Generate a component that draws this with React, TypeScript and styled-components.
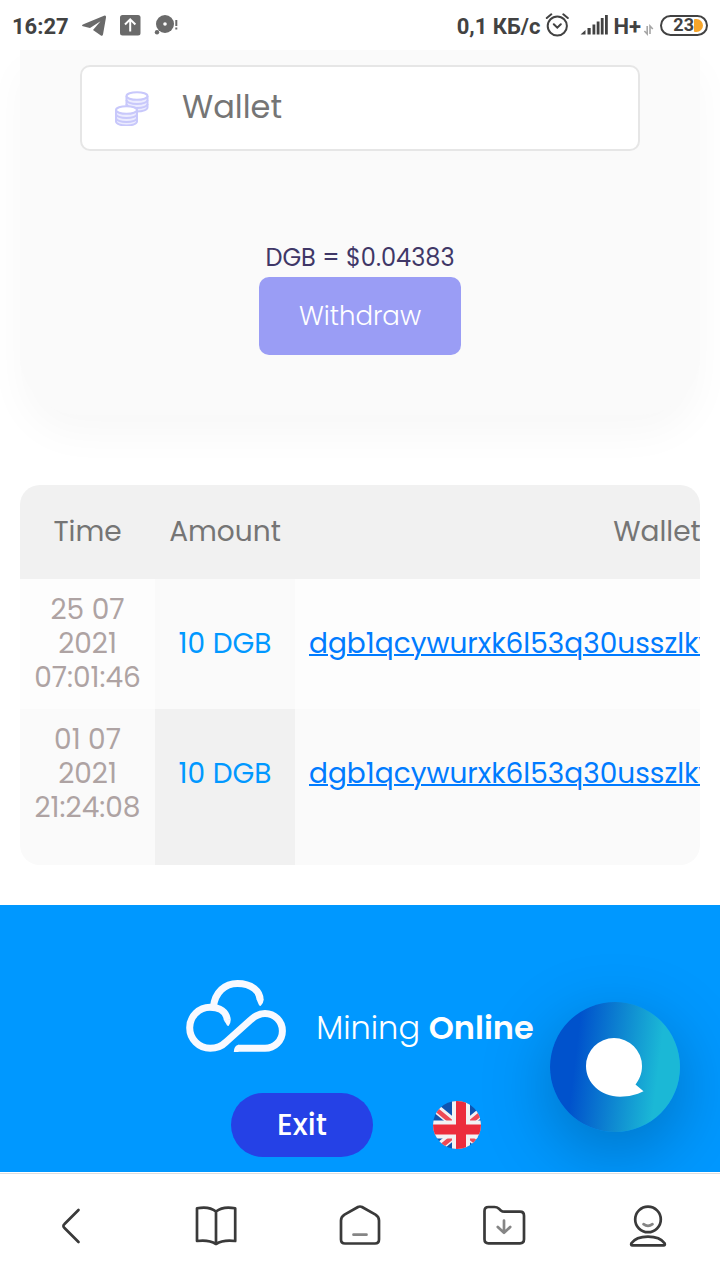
import React from "react";
import styled, { createGlobalStyle } from "styled-components";

const GlobalStyle = createGlobalStyle`
  *, *::before, *::after { box-sizing: border-box; }
  body {
    margin: 0;
    background: #fff;
    font-family: Poppins, Inter, "Liberation Sans", sans-serif;
  }
`;

const Screen = styled.div`
  display: flex;
  flex-direction: column;
  min-height: 100vh;
  overflow: hidden;
`;

const StatusBar = styled.header`
  position: relative;
  z-index: 1;
  display: flex;
  align-items: center;
  justify-content: space-between;
  height: 50px;
  padding: 0 12px;
  background: #fff;
  color: #424242;
  font: 700 22px/28px Roboto, sans-serif;
`;

const StatusGroup = styled.div<{ $gap: number }>`
  display: flex;
  align-items: center;
  gap: ${(p) => p.$gap}px;
`;

const StatusText = styled.span`
  padding-top: 4px;
`;

const Glyph = styled.svg`
  display: block;
  flex: none;
`;

const Card = styled.form`
  display: flex;
  flex-direction: column;
  align-items: center;
  margin: 0 20px;
  padding: 15px 60px 60px;
  background: #fafafa;
  border-radius: 0 0 60px 60px;
  box-shadow: 0 20px 40px rgba(0, 0, 0, 0.032);
`;

const WalletField = styled.label`
  display: flex;
  align-items: center;
  width: 100%;
  height: 86px;
  padding: 0 32px;
  gap: 32px;
  background: #fff;
  border: 2px solid #e6e6e6;
  border-radius: 10px;
`;

const WalletInput = styled.input`
  flex: 1;
  min-width: 0;
  border: 0;
  outline: 0;
  padding: 0 0 2px;
  background: transparent;
  color: #333;
  font: 400 32px/48px Poppins, Inter, sans-serif;

  &::placeholder { color: #757575; opacity: 1; }
`;

const Rate = styled.p`
  margin: 89px 0 1px;
  color: #3f3767;
  font-size: 24px;
  line-height: 36px;
`;

const WithdrawButton = styled.button`
  min-width: 202px;
  height: 78px;
  border: 0;
  border-radius: 10px;
  background: #9a9df5;
  color: #fff;
  font: 300 26px/40px Poppins, Inter, sans-serif;
`;

const History = styled.section`
  margin: 70px 20px 40px;
  overflow-x: auto;
  scrollbar-width: none;
  border-radius: 20px;
`;

const HistoryTable = styled.table`
  width: 999px;
  table-layout: fixed;
  border-collapse: collapse;
  text-align: center;
  font-size: 28px;
  line-height: 34px;
`;

const HeadCell = styled.th<{ $width: number }>`
  width: ${(p) => p.$width}px;
  height: 94px;
  padding: 0 14px;
  background: #f1f1f1;
  color: #757575;
  font-weight: 400;
`;

const Cell = styled.td`
  height: 130px;
  padding: 0 14px;
  background: #fdfdfd;
  color: #aea3a3;
`;

const AmountCell = styled(Cell)`
  background: #fafafa;
  color: #0098ff;
`;

const AddressCell = styled(Cell)`
  text-align: left;
  white-space: nowrap;
`;

const HistoryRow = styled.tr`
  &:last-child ${Cell} {
    height: 156px;
    padding-bottom: 26px;
    background: #fafafa;
  }
  &:last-child ${AmountCell} { background: #f1f1f1; }
`;

const AddressLink = styled.a`
  color: #007bff;
  text-decoration: underline;
  text-decoration-thickness: 2px;
`;

const Footer = styled.footer`
  position: relative;
  flex: 1;
  padding: 75px 20px 15px;
  background: #0098ff;
`;

const Brand = styled.div`
  display: flex;
  align-items: center;
  justify-content: center;
  gap: 30px;
  color: #fff;
  font-size: 32px;
  line-height: 48px;
`;

const BrandName = styled.span`
  padding-top: 24px;
  font-weight: 300;
  b { font-weight: 600; }
`;

const Actions = styled.div`
  display: flex;
  align-items: center;
  justify-content: center;
  gap: 60px;
  margin-top: 41px;
  padding-right: 8px;
`;

const ExitButton = styled.button`
  width: 142px;
  height: 64px;
  border: 0;
  border-radius: 32px;
  background: #2541e6;
  color: #fff;
  font: 500 30px/40px Poppins, Inter, sans-serif;
`;

const LanguageButton = styled.button`
  width: 48px;
  height: 48px;
  padding: 0;
  border: 0;
  border-radius: 50%;
  background: none;
`;

const ChatButton = styled.button`
  position: absolute;
  right: 40px;
  bottom: 40px;
  width: 130px;
  height: 130px;
  padding: 0;
  border: 0;
  border-radius: 50%;
  background: linear-gradient(97deg, #0052cc 22%, #1bb8d6 80%);
  box-shadow: 0 20px 70px rgba(0, 0, 0, 0.25);
`;

const NavBar = styled.nav`
  position: relative;
  z-index: 1;
  display: grid;
  grid-template-columns: repeat(5, 1fr);
  align-items: center;
  height: 108px;
  background: #fff;
  box-shadow: inset 0 1px #fff, inset 0 2px #dedede;
`;

const NavButton = styled.button`
  display: flex;
  justify-content: center;
  padding: 0;
  border: 0;
  background: none;
`;

function NavIcon({ children }: { children: React.ReactNode }) {
  return (
    <Glyph width="48" height="48" viewBox="0 0 48 48" fill="none" stroke="#3a3a3a" strokeWidth="2.7" strokeLinecap="round" strokeLinejoin="round" aria-hidden="true">
      {children}
    </Glyph>
  );
}

const navItems = [
  { label: "Back", art: <path d="M30.5 8 L16.5 22 Q14.3 24 16.5 26 L30.5 40" /> },
  {
    label: "Bookmarks",
    art: <path d="M24 9.5 Q17 3.8 5 6.3 V39 Q17 37.5 24 42 Q31 37.5 43.2 39 V6.3 Q31 3.8 24 9.5 Z M24 9.5 V42" />,
  },
  {
    label: "Home",
    art: (
      <>
        <path d="M22 5 Q24 4 26 5 L39.5 12.7 Q43 15 43 18.5 V37.5 Q43 41.5 39 41.5 H9 Q5 41.5 5 37.5 V18.5 Q5 15 8.5 12.7 Z" />
        <path d="M17.5 32.7 H30.5" stroke="#858585" />
      </>
    ),
  },
  {
    label: "Downloads",
    art: (
      <>
        <path d="M8.5 5 H14.5 Q17 5 19 6.8 L20.8 8.4 Q22.3 9.7 24.5 9.7 H40 Q44 9.7 44 13.7 V37.3 Q44 41.3 40 41.3 H8.5 Q4.5 41.3 4.5 37.3 V9 Q4.5 5 8.5 5 Z" />
        <path d="M24 18.5 V30.5 M17.8 25 L24 30.8 L30.2 25" stroke="#858585" />
      </>
    ),
  },
  {
    label: "Profile",
    art: (
      <>
        <circle cx="24" cy="17.4" r="12.8" />
        <path d="M19.5 22.2 Q24 25.5 28.5 22.2" stroke="#858585" />
        <path d="M8.5 43.4 Q6.5 43.4 7.4 41.3 Q12 34.7 24 34.7 Q36 34.7 40.6 41.3 Q41.5 43.4 39.5 43.4 Z" />
      </>
    ),
  },
];

const payouts = [
  { time: "25 07 2021 07:01:46", amount: "10 DGB", address: "dgb1qcywurxk6l53q30usszlkvyt8ep4m7hd2ca9fnw" },
  { time: "01 07 2021 21:24:08", amount: "10 DGB", address: "dgb1qcywurxk6l53q30usszlkvyt8ep4m7hd2ca9fnw" },
];

function StatusIcons() {
  return (
    <Glyph width="98" height="26" viewBox="80 12 98 26" fill="#6a6a6a" aria-hidden="true">
      <path d="M82 25.6 Q82 24.8 84 24 L104 15.7 Q106.4 15 106 17.5 L103 34.5 Q102.4 36.6 100.5 35.3 L93 30 L100.5 21.3 L90 28 L83 26.3 Q82 26 82 25.6 Z" />
      <rect x="120" y="15" width="20.5" height="20.5" rx="2.5" />
      <path d="M130.2 31.5 V19.5 M125 24.5 L130.2 19.3 L135.4 24.5" fill="none" stroke="#fff" strokeWidth="2" />
      <circle cx="165" cy="24" r="9" />
      <circle cx="165" cy="24" r="1.8" fill="#fff" />
      <circle cx="157" cy="32.2" r="2.2" />
      <path d="M175.3 20 h2 v6 h-2 Z M175.3 27.5 h2 v2 h-2 Z" />
    </Glyph>
  );
}

function AlarmIcon() {
  return (
    <Glyph width="24" height="26" viewBox="546 12 24 26" fill="none" stroke="#424242" strokeWidth="2" strokeLinecap="round" aria-hidden="true">
      <circle cx="558.3" cy="26" r="9.6" />
      <path d="M547.8 18 L552.3 14.3 M568.8 18 L564.3 14.3 M554.8 24.2 L558.3 27.7 L561.8 24.2" />
    </Glyph>
  );
}

function SignalIcon() {
  return (
    <Glyph width="28" height="24" viewBox="581 13 28 24" fill="#424242" aria-hidden="true">
      <path d="M581.5 34.5 L586.5 30 V34.5 Z M588.5 28 h3.2 v6.5 h-3.2 Z M593.5 24.5 h2.8 v10 h-2.8 Z M597.7 21.5 h2.8 v13 h-2.8 Z M601.8 18 h2.8 v16.5 h-2.8 Z M606 15 h2.8 v19.5 h-2.8 Z" />
    </Glyph>
  );
}

function TransferIcon() {
  return (
    <Glyph width="12" height="26" viewBox="643 12 12 26" fill="none" stroke="#a6a6a6" strokeWidth="1.6" aria-hidden="true">
      <path d="M647.2 26 V34 L644.4 31 M650 34 V26 L652.8 29" />
    </Glyph>
  );
}

const Battery = styled.span`
  display: flex;
  align-items: center;
  justify-content: flex-end;
  width: 48px;
  height: 21px;
  padding-right: 3px;
  border: 2px solid #424242;
  border-radius: 11px;
  font-size: 18px;
  line-height: 20px;
`;

const Charge = styled.i`
  width: 9px;
  height: 13px;
  border-radius: 1px 7px 7px 1px;
  background: #f6a52b;
`;

function CoinsIcon() {
  const stack = (x: number, y: number) => (
    <g>
      <path d={`M${x - 10.5} ${y} V${y + 11.5} A10.5 4 0 0 0 ${x + 10.5} ${y + 11.5} V${y}`} fill="#ececfe" />
      <path d={`M${x - 10.5} ${y + 4} A10.5 4 0 0 0 ${x + 10.5} ${y + 4} M${x - 10.5} ${y + 8} A10.5 4 0 0 0 ${x + 10.5} ${y + 8}`} />
      <ellipse cx={x} cy={y} rx="10.5" ry="3.8" fill="#fff" />
    </g>
  );
  return (
    <Glyph width="36" height="36" viewBox="0 0 36 36" fill="none" stroke="#c8c8fb" strokeWidth="2" aria-hidden="true">
      {stack(23, 6)}
      {stack(12.5, 20)}
    </Glyph>
  );
}

function CloudLogo() {
  return (
    <Glyph width="100" height="72" viewBox="0 0 100 72" fill="none" stroke="#f8f9ff" strokeWidth="7" strokeLinejoin="round" aria-hidden="true">
      <path d="M27.4 27 C29 12 39 3.5 51.5 3.5 C66 3.5 74 11.5 74.2 20" />
      <path d="M24.2 27.3 A20.5 20.5 0 1 0 24.2 68.3 C31 68.3 36 66 40 62 L64.5 40 C69.5 35.3 74 33.5 79 33.5 A17.4 17.4 0 0 1 79 68.3 L52 68.3" />
      <path d="M24 27.3 C34 27.3 40.5 32 41.3 40" />
      <path d="M70.7 19.8 H77.7 Q77.5 23 74.6 26 Q73 26 72.5 24 Z M37.8 40.2 L44.8 39.5 Q44.8 43 42.6 46 Q40.8 46 40 43.5 Z M52.5 64.8 Q48 65.5 47.8 72 H52.5 Z" fill="#f8f9ff" stroke="none" />
    </Glyph>
  );
}

function UnionFlag() {
  return (
    <Glyph width="48" height="48" viewBox="0 0 48 48" aria-hidden="true">
      <clipPath id="flagDisc">
        <circle cx="24" cy="24" r="24" />
      </clipPath>
      <g clipPath="url(#flagDisc)">
        <rect width="48" height="48" fill="#0f55b0" />
        <path d="M-6 0 L62 56 M62 0 L-6 56" stroke="#f2f2f4" strokeWidth="9" />
        <path d="M-6 1 L28 29 M62 1 L28 29 M-6 57 L28 29 M62 57 L28 29" stroke="#ee4a56" strokeWidth="4.5" />
        <path d="M28 0 V48 M0 28.5 H48" stroke="#f2f2f4" strokeWidth="18" />
        <path d="M28 0 V48 M0 28.5 H48" stroke="#ec2d3d" strokeWidth="10" />
      </g>
    </Glyph>
  );
}

export default function App() {
  return (
    <Screen>
      <GlobalStyle />
      <StatusBar>
        <StatusGroup $gap={11}>
          <StatusText>16:27</StatusText>
          <StatusIcons />
        </StatusGroup>
        <StatusGroup $gap={5}>
          <StatusGroup $gap={11}>
            <StatusGroup $gap={5}>
              <StatusText>0,1 КБ/с</StatusText>
              <AlarmIcon />
            </StatusGroup>
            <StatusGroup $gap={5}>
              <SignalIcon />
              <StatusGroup $gap={2}>
                <StatusText>H+</StatusText>
                <TransferIcon />
              </StatusGroup>
            </StatusGroup>
          </StatusGroup>
          <Battery>
            23
            <Charge />
          </Battery>
        </StatusGroup>
      </StatusBar>

      <main>
        <Card onSubmit={(e) => e.preventDefault()}>
          <WalletField>
            <CoinsIcon />
            <WalletInput type="text" placeholder="Wallet" aria-label="Wallet" />
          </WalletField>
          <Rate>DGB = $0.04383</Rate>
          <WithdrawButton type="submit">Withdraw</WithdrawButton>
        </Card>

        <History>
          <HistoryTable>
            <thead>
              <tr>
                <HeadCell $width={135}>Time</HeadCell>
                <HeadCell $width={140}>Amount</HeadCell>
                <HeadCell $width={724}>Wallet</HeadCell>
              </tr>
            </thead>
            <tbody>
              {payouts.map((p) => (
                <HistoryRow key={p.time}>
                  <Cell>{p.time}</Cell>
                  <AmountCell>{p.amount}</AmountCell>
                  <AddressCell>
                    <AddressLink href="#transaction">{p.address}</AddressLink>
                  </AddressCell>
                </HistoryRow>
              ))}
            </tbody>
          </HistoryTable>
        </History>
      </main>

      <Footer>
        <Brand>
          <CloudLogo />
          <BrandName>
            Mining <b>Online</b>
          </BrandName>
        </Brand>
        <Actions>
          <ExitButton type="button">Exit</ExitButton>
          <LanguageButton type="button" aria-label="Language: English">
            <UnionFlag />
          </LanguageButton>
        </Actions>
        <ChatButton type="button" aria-label="Open chat">
          <Glyph width="130" height="130" viewBox="0 0 130 130" aria-hidden="true">
            <path d="M64 36 A28 28 0 0 1 92 64 C92 72 89 78 85.5 82.5 L93.5 89.3 C86 93 79 94.7 70 94.7 C51 94.7 36 81 36 64 A28 28 0 0 1 64 36 Z" fill="#fff" />
          </Glyph>
        </ChatButton>
      </Footer>

      <NavBar>
        {navItems.map((item) => (
          <NavButton key={item.label} type="button" aria-label={item.label}>
            <NavIcon>{item.art}</NavIcon>
          </NavButton>
        ))}
      </NavBar>
    </Screen>
  );
}
